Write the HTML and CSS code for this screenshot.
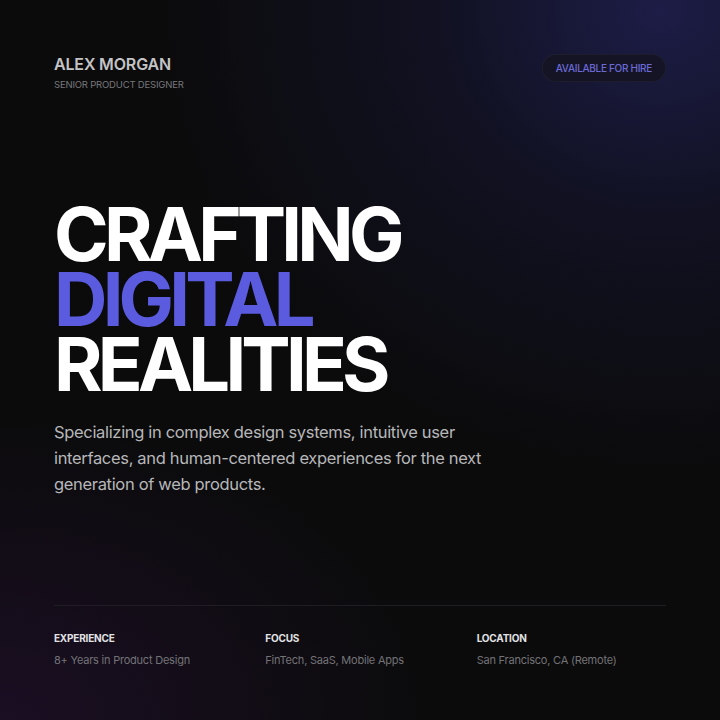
FILE: index.html
```html
<!DOCTYPE html>
<html lang="en">
<head>
<meta charset="utf-8">
<title>Alex Morgan</title>
<link rel="stylesheet" href="styles.css">
</head>
<body>
<main class="page">
  <header class="top">
    <div class="brand">
      <div class="name">ALEX MORGAN</div>
      <div class="role">SENIOR PRODUCT DESIGNER</div>
    </div>
    <div class="badge">AVAILABLE FOR HIRE</div>
  </header>
  <section class="hero">
    <h1 class="title">
      <span class="line">CRAFTING</span>
      <span class="line accent">DIGITAL</span>
      <span class="line">REALITIES</span>
    </h1>
    <p class="lead">Specializing in complex design systems, intuitive user interfaces, and human-centered experiences for the next generation of web products.</p>
  </section>
  <footer class="stats">
    <div class="stat">
      <div class="label">EXPERIENCE</div>
      <div class="value">8+ Years in Product Design</div>
    </div>
    <div class="stat">
      <div class="label">FOCUS</div>
      <div class="value">FinTech, SaaS, Mobile Apps</div>
    </div>
    <div class="stat">
      <div class="label">LOCATION</div>
      <div class="value">San Francisco, CA (Remote)</div>
    </div>
  </footer>
</main>
</body>
</html>
```
FILE: styles.css
```css
* { box-sizing: border-box; margin: 0; padding: 0; }
html, body { width: 720px; height: 720px; overflow: hidden; }
body {
  background: #0b0b0c;
  font-family: "Inter", "Liberation Sans", sans-serif;
  color: #fff;
}
.page {
  width: 720px;
  height: 720px;
  padding: 54px 54px 0 54px;
  display: flex;
  flex-direction: column;
  background:
    radial-gradient(ellipse 500px 460px at 660px 10px, rgba(36, 36, 96, 0.7), rgba(28, 28, 74, 0.35) 45%, rgba(11, 11, 12, 0) 100%),
    radial-gradient(ellipse 420px 300px at 0px 720px, rgba(42, 18, 58, 0.5), rgba(11, 11, 12, 0) 100%),
    #0b0b0c;
}
.top {
  display: flex;
  justify-content: space-between;
  align-items: flex-start;
}
.name {
  font-size: 16px;
  font-weight: 600;
  color: #c4c4c6;
  letter-spacing: -0.01em;
  line-height: 20px;
}
.role {
  margin-top: 5px;
  font-size: 9.5px;
  color: #77777b;
  letter-spacing: -0.02em;
  line-height: 12px;
}
.badge {
  height: 28px;
  padding: 0 13px;
  display: flex;
  align-items: center;
  border-radius: 14px;
  background: rgba(20, 20, 34, 0.85);
  border: 1px solid rgba(255, 255, 255, 0.04);
  color: #6c6ad6;
  font-size: 10px;
  letter-spacing: -0.03em;
  font-weight: 500;
}
.hero {
  margin-top: 111px;
}
.title {
  display: flex;
  flex-direction: column;
  font-size: 74px;
  font-weight: 700;
  line-height: 65px;
  letter-spacing: -0.065em;
  color: #ffffff;
}
.accent { color: #5b5be0; }
.lead {
  margin-top: 22px;
  width: 440px;
  font-size: 16.5px;
  line-height: 26px;
  color: #b7b7ba;
  letter-spacing: -0.02em;
  font-weight: 400;
}
.stats {
  margin-top: auto;
  margin-bottom: 53px;
  border-top: 1px solid #1e1e22;
  padding-top: 26px;
  display: grid;
  grid-template-columns: 1fr 1fr 1fr;
  column-gap: 22px;
}
.label {
  font-size: 10px;
  font-weight: 700;
  color: #e2e2e4;
  letter-spacing: -0.02em;
  line-height: 12px;
}
.value {
  margin-top: 9px;
  font-size: 11px;
  color: #737377;
  letter-spacing: -0.02em;
  line-height: 14px;
}
```
